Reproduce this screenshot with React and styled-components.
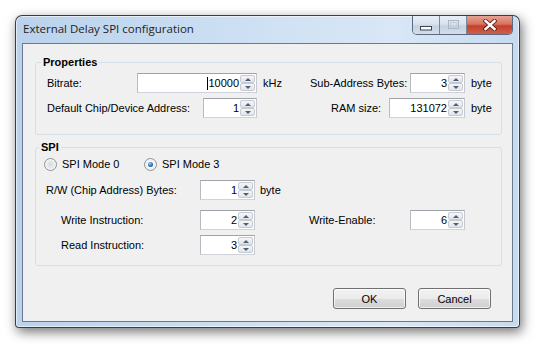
import React from "react";
import styled, { createGlobalStyle } from "styled-components";

const GlobalStyle = createGlobalStyle`
  html, body {
    margin: 0;
    padding: 0;
    background: #ffffff;
  }
  body {
    width: 546px;
    height: 348px;
    overflow: hidden;
    font-family: "Liberation Sans", Arial, sans-serif;
    font-size: 11px;
    color: #000;
  }
`;

const Page = styled.div`
  padding: 15px 0 0 15px;
`;

const Window = styled.div`
  width: 503px;
  height: 311px;
  border: 1px solid rgba(30, 34, 40, 0.85);
  border-radius: 7px 7px 4px 4px;
  background: linear-gradient(to right, #bad2ec 0%, #cde0f3 45%, #d9e7f6 75%, #c6daf0 100%);
  box-shadow: inset 0 0 0 1px rgba(255, 255, 255, 0.6), 2px 4px 12px rgba(0, 0, 0, 0.55);
  display: flex;
  flex-direction: column;
`;

const TitleBar = styled.div`
  height: 27px;
  display: flex;
  align-items: flex-start;
`;

const Title = styled.div`
  padding: 5px 0 0 7px;
  line-height: 16px;
  font-family: "Open Sans", "Noto Sans", sans-serif;
  font-size: 11.5px;
  color: #1e1e1e;
`;

const Caption = styled.div`
  margin-left: auto;
  margin-right: 6px;
  display: flex;
  height: 18px;
  border: 1px solid #5b6a80;
  border-top: none;
  border-radius: 0 0 5px 5px;
  overflow: hidden;
`;

const CapButton = styled.div`
  width: ${(p) => p.$w}px;
  display: flex;
  align-items: center;
  justify-content: center;
  border-left: ${(p) => (p.$first ? "none" : "1px solid #7b889b")};
  background: ${(p) =>
    p.$close
      ? "linear-gradient(to bottom, #e6a395 0%, #d8735e 45%, #c4402b 55%, #d0604a 100%)"
      : "linear-gradient(to bottom, #e7eef7 0%, #d9e3ef 45%, #c4d1e1 55%, #d2deeb 100%)"};
`;

const Client = styled.div`
  height: 277px;
  margin: 0 6px;
  border: 1px solid #6a7a8e;
  background: #f0f0f0;
  display: flex;
  flex-direction: column;
`;

const GroupBox = styled.fieldset`
  margin: ${(p) => p.$mt}px 10px 0 12px;
  padding: 0;
  border: 1px solid #d5dfe5;
  border-radius: 3px;
  min-inline-size: 0;
`;

const Legend = styled.legend`
  margin-left: ${(p) => p.$ml}px;
  padding: 0 2px;
  font-weight: bold;
  line-height: 13px;
`;

const GroupInner = styled.div`
  padding: ${(p) => p.$pt}px 6px ${(p) => p.$pb}px 0;
`;

const Row = styled.div`
  display: flex;
  align-items: center;
  height: ${(p) => p.$h || 20}px;
  margin-top: ${(p) => p.$mt || 0}px;
  padding-left: ${(p) => p.$pl || 0}px;
`;

const Label = styled.span`
  flex: none;
  width: ${(p) => p.$w}px;
  margin-left: ${(p) => p.$ml || 0}px;
  white-space: nowrap;
`;

const Unit = styled.span`
  flex: none;
  width: ${(p) => p.$w || 24}px;
  margin-left: ${(p) => p.$ml || 6}px;
`;

const SpinBox = styled.div`
  flex: none;
  box-sizing: border-box;
  width: ${(p) => p.$w}px;
  height: 20px;
  padding: 1px;
  border: 1px solid #a3a7ad;
  border-color: #9fa3a9 #c6cad0 #cfd3d9 #b7bbc1;
  background: #fff;
  display: flex;
`;

const SpinValue = styled.div`
  flex: 1;
  display: flex;
  align-items: center;
  justify-content: flex-end;
  padding-right: 1px;
`;

const Caret = styled.span`
  width: 1px;
  height: 13px;
  background: #000;
`;

const SpinButtons = styled.div`
  width: 15px;
  display: flex;
  flex-direction: column;
`;

const SpinBtn = styled.div`
  flex: 1;
  display: flex;
  align-items: center;
  justify-content: center;
  box-sizing: border-box;
  border: 1px solid #c5cad3;
  border-radius: 2px;
  background: linear-gradient(to bottom, #f6f6f6, #e2e4e8);
`;

const Arrow = styled.span`
  width: 0;
  height: 0;
  border-left: 3px solid transparent;
  border-right: 3px solid transparent;
  border-bottom: ${(p) => (p.$down ? "none" : "3px solid #4e5e7c")};
  border-top: ${(p) => (p.$down ? "3px solid #4e5e7c" : "none")};
`;

const RadioOption = styled.label`
  flex: none;
  width: ${(p) => p.$w || "auto"};
  display: flex;
  align-items: center;
  gap: 5px;
`;

const RadioCircle = styled.span`
  width: 13px;
  height: 13px;
  box-sizing: border-box;
  border-radius: 50%;
  border: 1px solid #8e9197;
  background: radial-gradient(circle at 50% 50%, #d8d9db 0%, #e9eaec 45%, #fbfbfb 80%);
  display: flex;
  align-items: center;
  justify-content: center;

  &::after {
    content: "";
    display: ${(p) => (p.$checked ? "block" : "none")};
    width: 5px;
    height: 5px;
    border-radius: 50%;
    background: radial-gradient(circle at 40% 35%, #9fd2f5 0%, #2a6cb8 55%, #143f78 100%);
    box-shadow: 0 0 0 1px #ffffff;
  }
`;

const ButtonRow = styled.div`
  margin-top: auto;
  margin-bottom: 12px;
  padding-right: 21px;
  display: flex;
  justify-content: flex-end;
  gap: 12px;
`;

const Button = styled.button`
  width: 73px;
  height: 21px;
  padding: 0;
  border: 1px solid #707070;
  border-radius: 3px;
  background: linear-gradient(to bottom, #f2f2f2 0%, #ebebeb 50%, #dddddd 51%, #cfcfcf 100%);
  box-shadow: inset 0 0 0 1px rgba(255, 255, 255, 0.7);
  font-family: "Liberation Sans", Arial, sans-serif;
  font-size: 11px;
  color: #000;
`;

const Spinner = ({ w, value, caret }) => (
  <SpinBox $w={w}>
    <SpinValue>
      {caret && <Caret />}
      {value}
    </SpinValue>
    <SpinButtons>
      <SpinBtn>
        <Arrow />
      </SpinBtn>
      <SpinBtn>
        <Arrow $down />
      </SpinBtn>
    </SpinButtons>
  </SpinBox>
);

const Radio = ({ checked, children, w }) => (
  <RadioOption $w={w}>
    <RadioCircle $checked={checked} />
    {children}
  </RadioOption>
);

const App = () => (
  <Page>
    <GlobalStyle />
    <Window>
      <TitleBar>
        <Title>External Delay SPI configuration</Title>
        <Caption>
          <CapButton $w={26} $first>
            <svg width="12" height="18" viewBox="0 0 12 18">
              <rect x="0.5" y="10.5" width="11" height="3.5" fill="#fff" stroke="#3d4656" />
            </svg>
          </CapButton>
          <CapButton $w={26}>
            <svg width="11" height="18" viewBox="0 0 11 18">
              <rect x="0.5" y="4.5" width="10" height="8" fill="none" stroke="#aab6c6" />
              <rect x="2.5" y="6.5" width="6" height="4" fill="none" stroke="#c2ccd9" />
            </svg>
          </CapButton>
          <CapButton $w={45} $close>
            <svg width="14" height="12" viewBox="0 0 14 12">
              <path d="M2.5 2 L11.5 10 M11.5 2 L2.5 10" stroke="#5a1e14" strokeWidth="4.2" strokeLinecap="square" />
              <path d="M2.5 2 L11.5 10 M11.5 2 L2.5 10" stroke="#ffffff" strokeWidth="2.4" strokeLinecap="square" />
            </svg>
          </CapButton>
        </Caption>
      </TitleBar>
      <Client>
        <GroupBox $mt={12}>
          <Legend $ml={5}>Properties</Legend>
          <GroupInner $pt={4} $pb={16}>
            <Row $pl={11}>
              <Label $w={90}>Bitrate:</Label>
              <Spinner w={120} value="10000" caret />
              <Unit $w={30}>kHz</Unit>
              <Label $w={100} $ml={17}>Sub-Address Bytes:</Label>
              <Spinner w={55} value="3" />
              <Unit>byte</Unit>
            </Row>
            <Row $pl={11} $mt={5}>
              <Label $w={156}>Default Chip/Device Address:</Label>
              <Spinner w={54} value="1" />
              <Label $w={58} $ml={74}>RAM size:</Label>
              <Spinner w={76} value="131072" />
              <Unit>byte</Unit>
            </Row>
          </GroupInner>
        </GroupBox>
        <GroupBox $mt={6}>
          <Legend $ml={3}>SPI</Legend>
          <GroupInner $pt={2} $pb={10}>
            <Row $h={16} $pl={8}>
              <Radio w="100px">SPI Mode 0</Radio>
              <Radio checked>SPI Mode 3</Radio>
            </Row>
            <Row $pl={10} $mt={8}>
              <Label $w={154}>R/W (Chip Address) Bytes:</Label>
              <Spinner w={55} value="1" />
              <Unit $ml={5}>byte</Unit>
            </Row>
            <Row $pl={25} $mt={10}>
              <Label $w={139}>Write Instruction:</Label>
              <Spinner w={55} value="2" />
              <Label $w={101} $ml={54}>Write-Enable:</Label>
              <Spinner w={55} value="6" />
            </Row>
            <Row $pl={25} $mt={5}>
              <Label $w={139}>Read Instruction:</Label>
              <Spinner w={55} value="3" />
            </Row>
          </GroupInner>
        </GroupBox>
        <ButtonRow>
          <Button>OK</Button>
          <Button>Cancel</Button>
        </ButtonRow>
      </Client>
    </Window>
  </Page>
);

export default App;
